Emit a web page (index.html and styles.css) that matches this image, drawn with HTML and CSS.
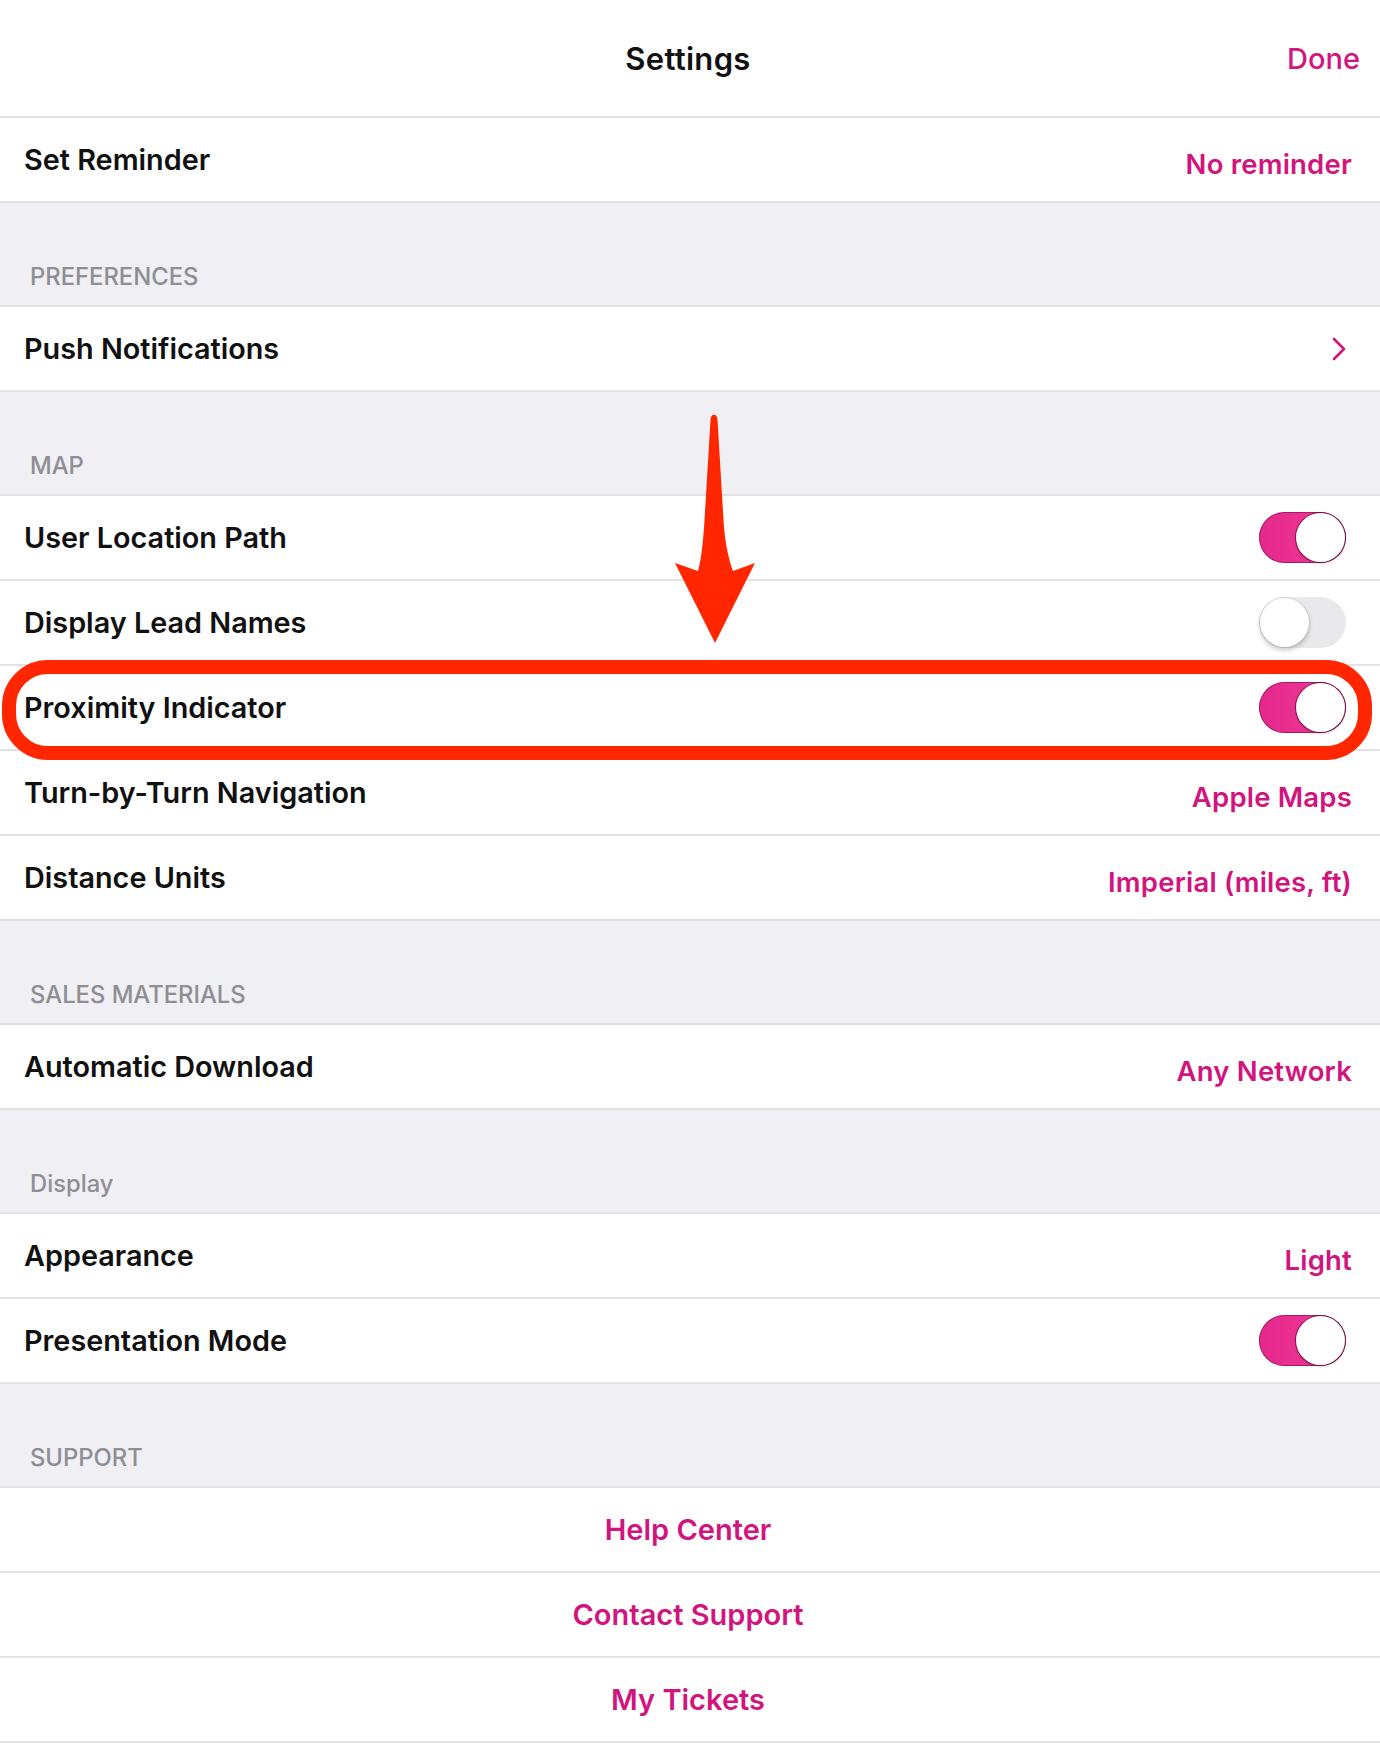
FILE: index.html
```html
<!DOCTYPE html>
<html lang="en">
<head>
<meta charset="utf-8">
<title>Settings</title>
<link rel="stylesheet" href="styles.css">
</head>
<body>
<div class="screen">
  <header class="navbar">
    <span></span>
    <h1 class="nav-title">Settings</h1>
    <span class="nav-done">Done</span>
  </header>

  <div class="row"><span class="label">Set Reminder</span><span class="value">No reminder</span></div>

  <div class="section-title">PREFERENCES</div>
  <div class="row">
    <span class="label">Push Notifications</span>
    <svg class="chevron" width="14" height="24" viewBox="0 0 14 24"><path d="M2 2 L12 12 L2 22" fill="none" stroke="#d1157e" stroke-width="2.6" stroke-linecap="round" stroke-linejoin="round"/></svg>
  </div>

  <div class="section-title">MAP</div>
  <div class="row"><span class="label">User Location Path</span><span class="toggle on"><span class="knob"></span></span></div>
  <div class="row"><span class="label">Display Lead Names</span><span class="toggle off"><span class="knob"></span></span></div>
  <div class="row highlighted"><span class="label">Proximity Indicator</span><span class="toggle on"><span class="knob"></span></span><span class="highlight-ring"></span></div>
  <div class="row"><span class="label">Turn-by-Turn Navigation</span><span class="value">Apple Maps</span></div>
  <div class="row"><span class="label">Distance Units</span><span class="value">Imperial (miles, ft)</span></div>

  <div class="section-title">SALES MATERIALS</div>
  <div class="row"><span class="label">Automatic Download</span><span class="value">Any Network</span></div>

  <div class="section-title">Display</div>
  <div class="row"><span class="label">Appearance</span><span class="value">Light</span></div>
  <div class="row"><span class="label">Presentation Mode</span><span class="toggle on"><span class="knob"></span></span></div>

  <div class="section-title">SUPPORT</div>
  <div class="row center"><span class="link">Help Center</span></div>
  <div class="row center"><span class="link">Contact Support</span></div>
  <div class="row center"><span class="link">My Tickets</span></div>

  <svg class="annotation-arrow" width="90" height="240" viewBox="0 0 90 240">
    <path d="M40.5,10 C40.5,3 47.5,3 47.5,10 L53.5,110 C55,135 59,150 63,161 L85,153 L45,233 L5,153 L28,161 C31,150 33,135 34.5,110 Z" fill="#ff2600"/>
  </svg>
</div>
</body>
</html>
```

FILE: styles.css
```css
* { box-sizing: border-box; }

html, body {
  margin: 0;
  padding: 0;
  background: #ffffff;
}

body {
  font-family: Inter, "Noto Sans", "Liberation Sans", sans-serif;
  color: #111111;
}

.screen {
  position: relative;
  width: 1380px;
  background: #efeff4;
}

.navbar {
  height: 118px;
  background: #ffffff;
  border-bottom: 2px solid #e2e2e6;
  display: grid;
  grid-template-columns: 1fr auto 1fr;
  align-items: center;
  padding: 0 20px 0 16px;
}

.nav-title {
  margin: 0;
  font-size: 31px;
  font-weight: 600;
  color: #111111;
  letter-spacing: 0.3px;
}

.nav-done {
  justify-self: end;
  font-size: 29px;
  font-weight: 500;
  color: #d1157e;
}

.row {
  position: relative;
  height: 85px;
  background: #ffffff;
  border-bottom: 2px solid #e2e2e6;
  display: flex;
  align-items: center;
  justify-content: space-between;
  padding: 0 28px 0 24px;
}

.row.center {
  justify-content: center;
}

.label {
  font-size: 28.8px;
  font-weight: 600;
  color: #111111;
}

.value {
  font-size: 27.5px;
  font-weight: 600;
  letter-spacing: 0.2px;
  color: #d1157e;
  padding-top: 8px;
}

.link {
  font-size: 29px;
  font-weight: 600;
  color: #d1157e;
}

.chevron {
  display: block;
  margin-right: 6px;
}

.section-title {
  height: 104px;
  border-bottom: 2px solid #e2e2e6;
  display: flex;
  align-items: flex-end;
  padding: 0 0 16px 30px;
  font-size: 23.8px;
  font-weight: 500;
  color: #8e8e93;
  line-height: 24px;
}

.toggle {
  position: relative;
  width: 87px;
  height: 51px;
  border-radius: 26px;
  display: block;
  margin-right: 6px;
}

.toggle.on {
  background: linear-gradient(90deg, #e6288c 0%, #ef3b97 100%);
  box-shadow: inset 0 0 0 1px rgba(110, 10, 60, 0.55);
}

.toggle.off {
  background: #e9e9eb;
}

.knob {
  position: absolute;
  top: 1px;
  width: 49px;
  height: 49px;
  border-radius: 50%;
  background: #ffffff;
}

.toggle.on .knob {
  right: 1px;
  box-shadow: 0 0 0 1px rgba(90, 10, 50, 0.7), 0 2px 3px rgba(0, 0, 0, 0.15);
}

.toggle.off .knob {
  left: 1px;
  box-shadow: 0 0 0 1px rgba(0, 0, 0, 0.08), 0 3px 5px rgba(0, 0, 0, 0.22);
}

.highlight-ring {
  position: absolute;
  left: 2px;
  right: 8px;
  top: -6px;
  bottom: -11px;
  border: 14px solid #ff2600;
  border-radius: 46px;
  pointer-events: none;
  z-index: 2;
}

.annotation-arrow {
  position: absolute;
  left: 670px;
  top: 410px;
  z-index: 3;
}
```
